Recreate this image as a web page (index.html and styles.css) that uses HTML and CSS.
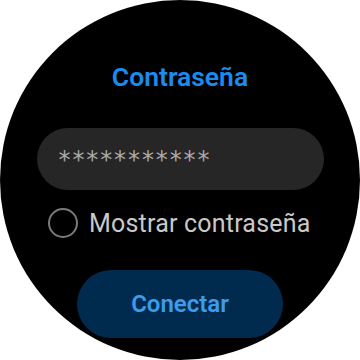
FILE: index.html
```html
<!DOCTYPE html>
<html lang="es">
<head>
<meta charset="utf-8">
<link rel="stylesheet" href="styles.css">
</head>
<body>
<div class="watch">
  <h1 class="title">Contraseña</h1>
  <div class="field"><span class="dots">***********</span></div>
  <label class="check">
    <span class="radio"></span>
    <span class="check-label">Mostrar contraseña</span>
  </label>
  <button class="connect">Conectar</button>
</div>
</body>
</html>
```
FILE: styles.css
```css
html, body {
  margin: 0;
  padding: 0;
  background: #ffffff;
}
.watch {
  width: 360px;
  height: 360px;
  border-radius: 50%;
  background: #000000;
  overflow: hidden;
  display: flex;
  flex-direction: column;
  align-items: center;
  font-family: Roboto, "Noto Sans", sans-serif;
  box-sizing: border-box;
  padding-top: 61px;
}
.title {
  margin: 0;
  height: 32px;
  line-height: 32px;
  font-size: 26.5px;
  font-weight: 600;
  color: #1a8cf0;
}
.field {
  margin-top: 35px;
  width: 287px;
  height: 62px;
  border-radius: 31px;
  background: #262626;
  display: flex;
  align-items: center;
  padding-left: 22px;
  box-sizing: border-box;
}
.dots {
  color: #a9a9a9;
  font-size: 24px;
  letter-spacing: 1.9px;
  font-family: "DejaVu Sans", sans-serif;
  padding-top: 2px;
}
.check {
  margin-top: 18px;
  align-self: flex-start;
  margin-left: 48px;
  display: flex;
  align-items: center;
  gap: 11px;
  height: 30px;
}
.radio {
  width: 26px;
  height: 26px;
  border: 2px solid #7a7a7a;
  border-radius: 50%;
}
.check-label {
  color: #c9c9c9;
  font-size: 25px;
  letter-spacing: 0.2px;
}
.connect {
  margin-top: 32px;
  width: 206px;
  height: 68px;
  border: none;
  border-radius: 34px;
  background: #002a4e;
  color: #3c9cec;
  font-family: Roboto, "Noto Sans", sans-serif;
  font-size: 24px;
  font-weight: 600;
  padding: 0;
}
```
